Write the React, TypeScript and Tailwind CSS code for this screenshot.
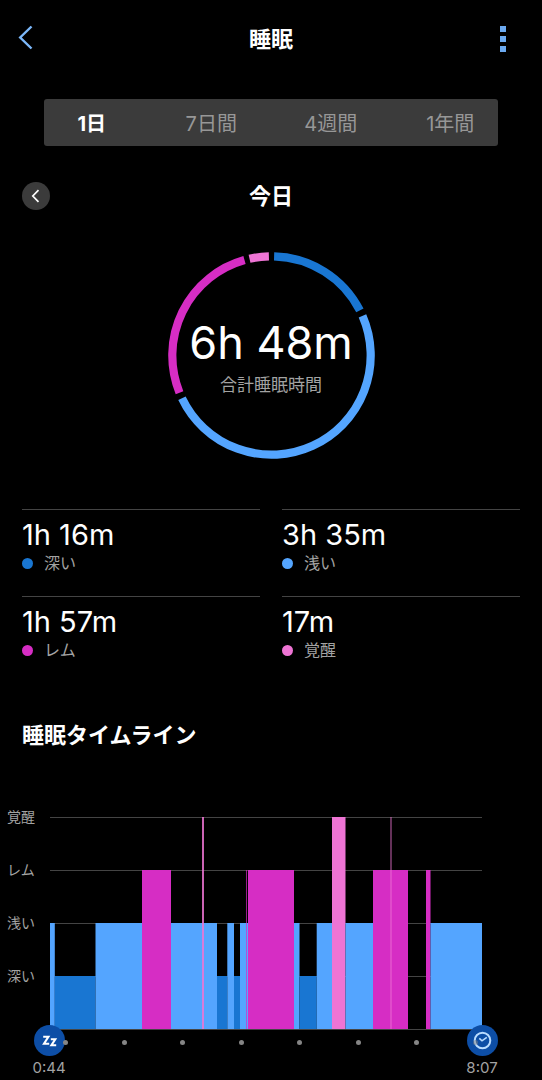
import { useState } from 'react';

type Stage = 'deep' | 'light' | 'rem' | 'awake';

const STAGE_COLOR: Record<Stage, string> = {
  deep: '#1976d2',
  light: '#54a5ff',
  rem: '#d62dc4',
  awake: '#ee74d4',
};

const STAGE_TOP: Record<Stage, number> = { awake: 0, rem: 53, light: 106, deep: 159 };

const RANGES = ['1日', '7日間', '4週間', '1年間'];

const STATS: { stage: Stage; label: string; value: string; dot: string }[] = [
  { stage: 'deep', label: '深い', value: '1h 16m', dot: 'bg-[#1976d2]' },
  { stage: 'light', label: '浅い', value: '3h 35m', dot: 'bg-[#54a5ff]' },
  { stage: 'rem', label: 'レム', value: '1h 57m', dot: 'bg-[#d62dc4]' },
  { stage: 'awake', label: '覚醒', value: '17m', dot: 'bg-[#ee74d4]' },
];

// start / end in degrees, clockwise from the top
const ARCS: { stage: Stage; from: number; to: number }[] = [
  { stage: 'deep', from: 1.5, to: 63 },
  { stage: 'light', from: 66.5, to: 244.5 },
  { stage: 'rem', from: 248, to: 344.2 },
  { stage: 'awake', from: 347.2, to: 358.5 },
];

// start / end on the 432 unit time axis
const BARS: { stage: Stage; from: number; to: number; opacity?: number }[] = [
  { stage: 'light', from: 0, to: 4.8 },
  { stage: 'deep', from: 4.8, to: 45.5 },
  { stage: 'light', from: 45.5, to: 92 },
  { stage: 'rem', from: 92, to: 121 },
  { stage: 'light', from: 121, to: 167 },
  { stage: 'awake', from: 152, to: 154, opacity: 0.85 },
  { stage: 'deep', from: 167, to: 177.3 },
  { stage: 'light', from: 177.3, to: 184 },
  { stage: 'deep', from: 184, to: 190 },
  { stage: 'light', from: 190, to: 198 },
  { stage: 'rem', from: 196, to: 197, opacity: 0.7 },
  { stage: 'rem', from: 198, to: 244 },
  { stage: 'light', from: 244, to: 249.5 },
  { stage: 'deep', from: 249.5, to: 266.7 },
  { stage: 'light', from: 266.7, to: 282 },
  { stage: 'awake', from: 282, to: 295.5 },
  { stage: 'light', from: 295.5, to: 323 },
  { stage: 'rem', from: 323, to: 358 },
  { stage: 'awake', from: 340.3, to: 341.7, opacity: 0.6 },
  { stage: 'rem', from: 376, to: 380.5 },
  { stage: 'light', from: 380.5, to: 432 },
];

function arcPath(from: number, to: number) {
  const r = 99.2;
  const point = (deg: number) => {
    const a = (deg * Math.PI) / 180;
    return `${103.5 + r * Math.sin(a)} ${103.5 - r * Math.cos(a)}`;
  };
  return `M${point(from)} A${r} ${r} 0 ${to - from > 180 ? 1 : 0} 1 ${point(to)}`;
}

function Header() {
  return (
    <header className="grid h-[78px] grid-cols-[1fr_auto_1fr] items-center px-4">
      <button type="button" aria-label="戻る" className="justify-self-start">
        <svg className="h-7 w-5" viewBox="0 0 20 28" fill="none" stroke="#7cb8fa" strokeWidth={2.4}>
          <path d="M15.5 1.5L4.2 12.5L15.5 23.5" />
        </svg>
      </button>
      <h1 className="text-[22px] leading-8 font-bold">睡眠</h1>
      <button type="button" aria-label="メニュー" className="mr-5 flex flex-col gap-1 justify-self-end">
        <span className="size-1.5 bg-[#6ba9f0]" />
        <span className="size-1.5 bg-[#6ba9f0]" />
        <span className="size-1.5 bg-[#6ba9f0]" />
      </button>
    </header>
  );
}

function RangeTabs() {
  const [range, setRange] = useState(RANGES[0]);

  return (
    <div className="mx-11 mt-[21px] rounded-[3px] bg-[#3b3b3b]">
      <div role="tablist" className="-mx-3 grid h-[47px] grid-cols-4">
        {RANGES.map((item) => (
          <button
            key={item}
            type="button"
            role="tab"
            aria-selected={item === range}
            onClick={() => setRange(item)}
            className={`pt-0.5 text-xl leading-7 ${item === range ? 'font-bold text-white' : 'text-[#979797]'}`}
          >
            {item}
          </button>
        ))}
      </div>
    </div>
  );
}

function SleepRing() {
  return (
    <div className="mx-auto mt-[42px] grid size-[207px] place-items-center">
      <svg className="col-start-1 row-start-1 size-full" viewBox="0 0 207 207" fill="none" strokeWidth={8.2}>
        {ARCS.map((arc) => (
          <path key={arc.stage} d={arcPath(arc.from, arc.to)} stroke={STAGE_COLOR[arc.stage]} />
        ))}
      </svg>
      <div className="col-start-1 row-start-1 text-center">
        <p className="text-[45px] leading-[56px] whitespace-nowrap">6h 48m</p>
        <p className="mt-0.5 text-[17px] leading-6 text-[#a3a3a3]">合計睡眠時間</p>
      </div>
    </div>
  );
}

function Stats() {
  return (
    <dl className="mx-[22px] mt-[50px] grid grid-cols-2 gap-x-[22px]">
      {STATS.map((stat) => (
        <div key={stat.stage} className="flex h-[87px] flex-col-reverse justify-end border-t border-[#444] pt-2">
          <dt className="flex items-center gap-[11px] text-base leading-[22px] text-[#a3a3a3]">
            <span className={`size-[11px] rounded-full ${stat.dot}`} />
            {stat.label}
          </dt>
          <dd className="text-[29px] leading-[34px]">{stat.value}</dd>
        </div>
      ))}
    </dl>
  );
}

function SleepIcon() {
  return (
    <svg className="size-[31px]" viewBox="0 0 31 31" fill="none" stroke="#fff" strokeWidth={2.1}>
      <circle cx="15.5" cy="15.5" r="15.5" fill="#0d4ea6" stroke="none" />
      <path d="M9.2 11.7H14.4L10 18.7H15.2" />
      <path d="M16.8 14.2H21.3L17.4 20.3H22.2" />
    </svg>
  );
}

function WakeIcon() {
  return (
    <svg className="size-[31px]" viewBox="0 0 31 31" fill="none" stroke="#b9dcff" strokeWidth={2}>
      <circle cx="15.5" cy="15.5" r="15.5" fill="#0d4ea6" stroke="none" />
      <circle cx="15.5" cy="15.5" r="7.8" />
      <path d="M12.3 13.4L15 15.8L19.8 12.3" strokeWidth={1.6} />
    </svg>
  );
}

function Timeline() {
  return (
    <section>
      <h2 className="mx-[22px] mt-9 text-[22px] leading-8 font-bold">睡眠タイムライン</h2>
      <div className="mt-[66px] flex pr-[60px]">
        <div className="-mt-3 flex w-[50px] shrink-0 flex-col gap-[29px] pl-[7px] text-sm leading-6 text-[#a3a3a3]">
          <span>覚醒</span>
          <span>レム</span>
          <span>浅い</span>
          <span>深い</span>
        </div>
        <div className="min-w-0 flex-1">
          <svg className="h-[213px] w-full" viewBox="0 0 432 213" preserveAspectRatio="none">
            {[0, 53, 106, 159, 212].map((y) => (
              <rect key={y} x={0} y={y} width={432} height={1} fill="#444" />
            ))}
            {BARS.map((bar) => (
              <rect
                key={`${bar.stage}-${bar.from}`}
                x={bar.from}
                y={STAGE_TOP[bar.stage]}
                width={bar.to - bar.from}
                height={212 - STAGE_TOP[bar.stage]}
                fill={STAGE_COLOR[bar.stage]}
                opacity={bar.opacity}
              />
            ))}
          </svg>
          <div className="relative -mt-[5px]">
            <div className="-mr-4 -ml-[17px] flex justify-between text-[15px] leading-6 text-[#a3a3a3]">
              <div className="flex w-8 flex-col items-center">
                <SleepIcon />
                <span>0:44</span>
              </div>
              <div className="flex w-8 flex-col items-center">
                <WakeIcon />
                <span>8:07</span>
              </div>
            </div>
            <div className="absolute inset-x-0 top-[15px] flex justify-between pr-1 pl-[13px]">
              {Array.from({ length: 8 }, (_, i) => (
                <span key={i} className={`size-[5px] rounded-full bg-[#858585] ${i === 7 ? 'opacity-50' : ''}`} />
              ))}
            </div>
          </div>
        </div>
      </div>
    </section>
  );
}

export default function App() {
  return (
    <main
      lang="ja"
      className="min-h-screen overflow-hidden bg-black font-[Inter,'Noto_Sans_CJK_JP',sans-serif] text-white"
    >
      <Header />
      <RangeTabs />
      <div className="mx-[22px] mt-9 grid h-7 grid-cols-[1fr_auto_1fr] items-center">
        <button
          type="button"
          aria-label="前の日"
          className="grid size-7 place-items-center rounded-full bg-[#3b3b3b]"
        >
          <svg className="size-4" viewBox="0 0 16 16" fill="none" stroke="#fff" strokeWidth={1.7}>
            <path d="M10.5 2.2L4.8 8L10.5 13.8" />
          </svg>
        </button>
        <h2 className="text-[22px] leading-7 font-bold">今日</h2>
      </div>
      <SleepRing />
      <Stats />
      <Timeline />
    </main>
  );
}
